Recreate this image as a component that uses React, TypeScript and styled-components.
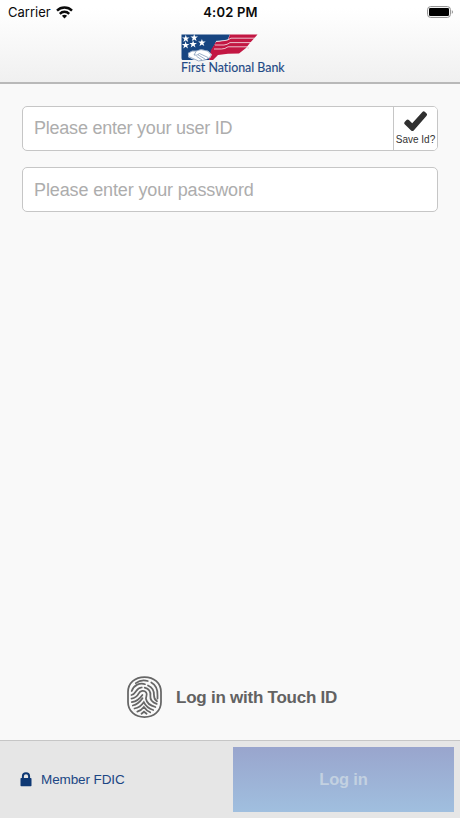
import React from "react";
import styled, { createGlobalStyle } from "styled-components";

const GlobalStyle = createGlobalStyle`
  * { box-sizing: border-box; }
  html, body { margin: 0; padding: 0; background: #f9f9f9; }
  body { font-family: "Liberation Sans", Arial, sans-serif; }
`;

const Screen = styled.div`
  width: 460px;
  height: 818px;
  display: flex;
  flex-direction: column;
  background: #f9f9f9;
  overflow: hidden;
`;

const Header = styled.header`
  height: 84px;
  flex: none;
  border-bottom: 2px solid #b9b9b9;
  background: linear-gradient(#ffffff 10%, #f0f0f0);
`;

const StatusBar = styled.div`
  height: 24px;
  display: grid;
  grid-template-columns: 1fr auto 1fr;
  align-items: center;
  padding: 0 6px 0 8px;
  color: #0a0a0a;
  font-family: Inter, sans-serif;
`;

const Carrier = styled.div`
  display: flex;
  align-items: center;
  gap: 5px;
  font-size: 13px;
  line-height: 24px;
`;

const Clock = styled.div`
  margin-left: -1px;
  font-size: 13px;
  line-height: 24px;
  font-weight: 600;
  letter-spacing: 0.2px;
`;

const BatterySlot = styled.div`
  display: flex;
  justify-content: flex-end;
`;

const Brand = styled.div`
  display: flex;
  flex-direction: column;
  width: 106px;
  margin: 10px 0 0 181px;
`;

const BrandName = styled.div`
  margin-top: -1px;
  font-family: Lato, sans-serif;
  font-size: 12.4px;
  line-height: 14px;
  font-variant-ligatures: none;
  color: #1f4a86;
  -webkit-text-stroke: 0.15px #1f4a86;
  white-space: nowrap;
`;

const Form = styled.form`
  flex: 1;
  display: flex;
  flex-direction: column;
  padding: 22px 22px 0;
`;

const Field = styled.div`
  display: flex;
  height: 45px;
  margin-bottom: 16px;
  background: #fff;
  border: 1px solid #c6c6c6;
  border-radius: 5px;
  overflow: hidden;
`;

const Input = styled.input<{ $tracking: string; $drop?: string }>`
  flex: 1;
  min-width: 0;
  border: 0;
  outline: 0;
  padding: ${(p) => p.$drop ?? "0"} 11px 0;
  background: transparent;
  font-family: "Liberation Sans", Arial, sans-serif;
  font-size: 18px;
  letter-spacing: ${(p) => p.$tracking};
  &::placeholder { color: #adadad; opacity: 1; }
`;

const SaveId = styled.button`
  width: 44px;
  padding: 2px 0 0;
  border: 0;
  border-left: 1px solid #c6c6c6;
  background: #fff;
  display: flex;
  flex-direction: column;
  align-items: center;
  justify-content: flex-start;
  gap: 1px;
  color: #333;
  font-family: "Liberation Sans", Arial, sans-serif;
  font-size: 10px;
  line-height: 12px;
  white-space: nowrap;
`;

const TouchLogin = styled.button`
  align-self: flex-start;
  margin: auto 0 22px 105px;
  padding: 0;
  border: 0;
  background: none;
  display: flex;
  align-items: center;
  gap: 14px;
  color: #626262;
  font-family: "Liberation Sans", Arial, sans-serif;
  font-size: 17px;
  line-height: 20px;
  font-weight: 700;
  letter-spacing: -0.24px;
`;

const TouchLabel = styled.span`
  padding-top: 2px;
`;

const Footer = styled.footer`
  height: 78px;
  flex: none;
  display: flex;
  align-items: center;
  justify-content: space-between;
  padding: 0 6px 0 20px;
  background: #e6e6e6;
  border-top: 1px solid #c6c6c6;
`;

const Member = styled.div`
  display: flex;
  align-items: center;
  gap: 9px;
  color: #1c4684;
  font-size: 13.5px;
  letter-spacing: -0.1px;
`;

const LoginButton = styled.button`
  width: 221px;
  height: 65px;
  padding: 0;
  border: 0;
  background: linear-gradient(#99a5cd, #a0bfdf);
  color: #c3d1e1;
  font-family: "Liberation Sans", Arial, sans-serif;
  font-size: 16.5px;
  font-weight: 700;
  letter-spacing: -0.2px;
`;

const WifiIcon = () => (
  <svg width="17" height="13" viewBox="0 0 17 13" fill="none" stroke="#0a0a0a" strokeWidth="2.4">
    <path d="M1 4.6C5.1.5 11.9.5 16 4.6" />
    <path d="M3.8 7.8C6.5 5.1 10.5 5.1 13.2 7.8" />
    <path d="M5.9 9.8Q8.5 7.6 11.1 9.8L8.5 12.4Z" fill="#0a0a0a" stroke="none" />
  </svg>
);

const BatteryIcon = () => (
  <svg width="27" height="13" viewBox="0 0 27 13">
    <rect x=".6" y=".6" width="22.8" height="10.8" rx="3" fill="#fff" stroke="#8c8c8c" />
    <rect x="2" y="2" width="20" height="8" rx="1.3" fill="#000" />
    <path d="M24.8 4Q27.4 6 24.8 8Z" fill="#999" />
  </svg>
);

const star = "M0-3.9.9-1.2H3.8L1.5.5 2.4 3.3 0 1.6-2.4 3.3-1.5.5-3.8-1.2H-.9Z";
const stars = [[4.8, 4.6], [13.2, 3.8], [4.6, 11.2], [12.1, 10.2], [20.9, 8.8]];

const FlagLogo = () => (
  <svg width="78" height="28" viewBox="0 0 78 28">
    <path d="M.5.5H49L46.5 6 35 7.5 31 16 28 26H1.5Q.5 26 .5 24Z" fill="#174581" />
    <path d="M49 .5H76.5L68.5 9.5 65 14 58 19.5 47 19.8 37 21 32 26H28L30 16 35 8 47 6Z" fill="#c31743" />
    <path d="M74 4.2H50Q47 6.2 44 6.5L35 7.4M70 8.6H49Q46 10.8 43 11H34M66.5 12.8H47Q44 15 40.5 15H33" fill="none" stroke="#f5eef0" strokeWidth=".8" />
    {stars.map(([x, y]) => (
      <path key={x} d={star} transform={`translate(${x} ${y})`} fill="#fff" />
    ))}
    <path d="M7 19 11 16.8 15 16.7 20 15.3 27 16.8 31 20.5 29.5 23.5 25 25.6 19 27.2 12 25.5 7 23Z" fill="#fff" />
    <path d="M7.3 19.4 11 17.1 15 17 20 15.6 26.5 17 30.3 20.8 28.6 23.4Q26 26 22 26.3 17 28 14 25.4L7.5 22.5ZM15 17.5 13 21Q16 22 18.5 19.5L27 23.5M17 20.8 24 25M15.5 22.3 21 26" fill="none" stroke="#6682a9" strokeWidth=".65" />
    <path d="M66.5 14h1.5" stroke="#d897a8" strokeWidth=".6" />
  </svg>
);

const CheckIcon = () => (
  <svg width="26" height="24" viewBox="0 0 26 24">
    <path d="M1.6 12.9 3.5 11Q4.7 10 5.9 11.1L9.2 14.3 19.4 2.9Q20.6 1.7 21.8 2.8L23.6 4.5Q24.6 5.6 23.6 6.8L10.7 21.4Q9.4 22.6 8.1 21.4L1.7 15.2Q.6 14 1.6 12.9Z" fill="#303030" />
  </svg>
);

const FingerprintIcon = () => (
  <svg width="35" height="42" viewBox="0 0 35 42" fill="none" stroke="#666" strokeWidth="1.75" strokeLinecap="round">
    <path d="M17.5 1C27 1 34 7 34 16V26C34 35 27 41 17.5 41S1 35 1 26V16C1 7 8 1 17.5 1Z" />
    <path d="M8.8 7.1C12.3 4.4 17 3.8 20.8 5M24.3 6.5C28.8 9 30.7 13 30.5 19V22.5" />
    <path d="M4.7 15C6.8 9 13 6.3 18 8.2M21 9.5C25.5 11.5 27.2 15 27 19.2 26.9 22.4 28 24 30 25.3" />
    <path d="M4.5 19C7.2 18.6 7.8 17 9.2 14.9 10.5 13 12.5 11.7 14.7 11.5M17.7 11.7C22 12.8 23.8 16.3 23.4 20 23 23.8 25.7 26.5 29.7 27.9" />
    <path d="M4.5 22.6C8.4 22 10.2 20.4 11.6 17.7 13.2 14.6 17.2 13.8 19.2 16.6 20.8 18.9 18.6 20.9 19 23 19.8 27 23.7 29.8 28.4 31" />
    <path d="M4.8 26.2C9.8 25.2 12.8 22.8 15.4 18.9M15.5 22.2C12.7 26.2 9.6 28.6 5.8 29.5" />
    <path d="M7.5 32.5C11.5 31.7 14.4 29.6 16.8 26.2 18.7 30.2 21.8 32.7 26.2 34" />
    <path d="M10.3 35.6C13 34.8 15.2 33.3 16.9 31 18.4 33.2 20.5 35.2 23.2 36.3M14.5 37.7 17 35.7 19.6 37.7" />
  </svg>
);

const LockIcon = () => (
  <svg width="12" height="15" viewBox="0 0 12 15">
    <path d="M2.9 7V4.3A3.1 3.1 0 0 1 9.1 4.3V7" fill="none" stroke="#0e3874" strokeWidth="2" />
    <rect x=".5" y="6" width="11" height="8.2" rx=".8" fill="#0e3874" />
  </svg>
);

export default function App() {
  return (
    <>
      <GlobalStyle />
      <Screen>
        <Header>
          <StatusBar>
            <Carrier><span>Carrier</span><WifiIcon /></Carrier>
            <Clock>4:02 PM</Clock>
            <BatterySlot><BatteryIcon /></BatterySlot>
          </StatusBar>
          <Brand>
            <FlagLogo />
            <BrandName>First National Bank</BrandName>
          </Brand>
        </Header>
        <Form onSubmit={(e) => e.preventDefault()}>
          <Field>
            <Input $tracking="-0.23px" placeholder="Please enter your user ID" />
            <SaveId type="button"><CheckIcon /><span>Save Id?</span></SaveId>
          </Field>
          <Field>
            <Input $tracking="-0.13px" $drop="2px" type="password" placeholder="Please enter your password" />
          </Field>
          <TouchLogin type="button"><FingerprintIcon /><TouchLabel>Log in with Touch ID</TouchLabel></TouchLogin>
        </Form>
        <Footer>
          <Member><LockIcon /><span>Member FDIC</span></Member>
          <LoginButton type="button">Log in</LoginButton>
        </Footer>
      </Screen>
    </>
  );
}
